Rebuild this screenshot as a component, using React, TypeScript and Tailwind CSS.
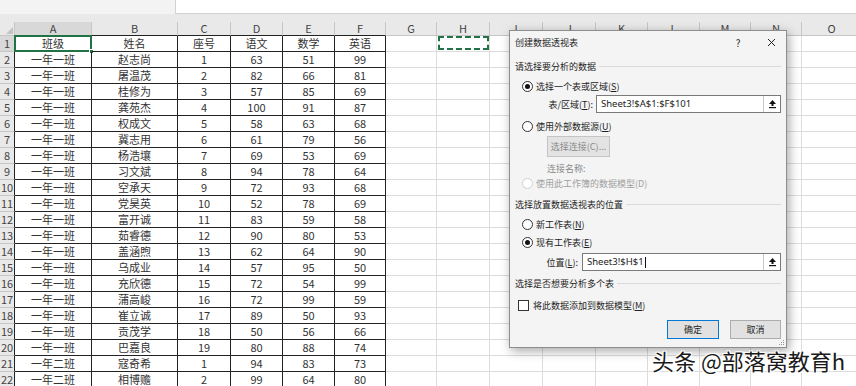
import React from "react";

const cols = [
  { k: "A", w: "w-[77px]" },
  { k: "B", w: "w-[86px]" },
  { k: "C", w: "w-[53px]" },
  { k: "D", w: "w-[52px]" },
  { k: "E", w: "w-[52px]" },
  { k: "F", w: "w-[51px]" },
  { k: "G", w: "w-[51px]" },
  { k: "H", w: "w-[53px]" },
  { k: "I", w: "w-[53px]" },
  { k: "J", w: "w-[53px]" },
  { k: "K", w: "w-[52px]" },
  { k: "L", w: "w-[52px]" },
  { k: "M", w: "w-[51px]" },
  { k: "N", w: "w-[51px]" },
  { k: "O", w: "w-[60px]" },
];

const data: string[][] = [
  ["班级", "姓名", "座号", "语文", "数学", "英语"],
  ["一年一班", "赵志尚", "1", "63", "51", "99"],
  ["一年一班", "屠温茂", "2", "82", "66", "81"],
  ["一年一班", "桂修为", "3", "57", "85", "69"],
  ["一年一班", "龚苑杰", "4", "100", "91", "87"],
  ["一年一班", "权成文", "5", "58", "63", "68"],
  ["一年一班", "冀志用", "6", "61", "79", "56"],
  ["一年一班", "杨浩壤", "7", "69", "53", "69"],
  ["一年一班", "习文斌", "8", "94", "78", "64"],
  ["一年一班", "空承天", "9", "72", "93", "68"],
  ["一年一班", "党昊英", "10", "52", "78", "69"],
  ["一年一班", "富开诚", "11", "83", "59", "58"],
  ["一年一班", "茹睿德", "12", "90", "80", "53"],
  ["一年一班", "盖涵煦", "13", "62", "64", "90"],
  ["一年一班", "乌成业", "14", "57", "95", "50"],
  ["一年一班", "充欣德", "15", "72", "54", "99"],
  ["一年一班", "蒲高峻", "16", "72", "99", "59"],
  ["一年一班", "崔立诚", "17", "89", "50", "93"],
  ["一年一班", "贡茂学", "18", "50", "56", "66"],
  ["一年一班", "巴嘉良", "19", "80", "88", "74"],
  ["一年二班", "寇奇希", "1", "94", "83", "73"],
  ["一年二班", "相博赡", "2", "99", "64", "80"],
];

function Radio({ checked, disabled }: { checked?: boolean; disabled?: boolean }) {
  return (
    <span
      className={`w-[11px] h-[11px] rounded-full border bg-white flex items-center justify-center shrink-0 ${
        disabled ? "border-[#cfcfcf]" : "border-[#333]"
      }`}
    >
      {checked && <span className="w-[5px] h-[5px] rounded-full bg-[#111]" />}
    </span>
  );
}

function U({ children }: { children: React.ReactNode }) {
  return <span className="underline underline-offset-1">{children}</span>;
}

function Heading({ text }: { text: string }) {
  return (
    <div className="flex items-center">
      <span>{text}</span>
      <span className="flex-1 h-px bg-[#dadada] ml-[3px]" />
    </div>
  );
}

function CollapseBtn() {
  return (
    <div className="w-[17px] h-full border-l border-[#c8c8c8] bg-white flex items-center justify-center">
      <svg width="9" height="10" viewBox="0 0 9 10">
        <polygon points="4.5,1 8,5 5.5,5 5.5,7 3.5,7 3.5,5 1,5" fill="#111" />
        <rect x="1" y="8" width="7" height="1.2" fill="#111" />
      </svg>
    </div>
  );
}

function Dialog() {
  return (
    <div className="absolute left-[509px] top-[30px] w-[278px] h-[318px] bg-[#f4f4f4] border border-[#8e8e8e] shadow-[2px_3px_10px_rgba(0,0,0,0.35)] flex flex-col px-[5px] text-[9px] leading-none text-[#1e1e1e] font-['Noto_Sans_CJK_SC',sans-serif]">
      <div className="h-[23px] flex items-center shrink-0">
        <span>创建数据透视表</span>
        <span className="ml-auto w-[20px] text-center text-[10px]">?</span>
        <span className="ml-[13px] w-[20px] flex justify-center">
          <svg width="9" height="9" viewBox="0 0 9 9">
            <path d="M1 1 L8 8 M8 1 L1 8" stroke="#222" strokeWidth="1" />
          </svg>
        </span>
      </div>
      <div className="h-[24px] flex flex-col justify-center shrink-0">
        <Heading text="请选择要分析的数据" />
      </div>
      <div className="h-[16px] flex items-center pl-[7px] gap-[3px] shrink-0">
        <Radio checked />
        <span>
          选择一个表或区域(<U>S</U>)
        </span>
      </div>
      <div className="h-[20px] flex items-center shrink-0">
        <span className="w-[78px] text-right">
          表/区域(<U>T</U>):
        </span>
        <div className="ml-[3px] flex-1 h-[18px] border border-[#7a7a7a] bg-white flex items-center">
          <span className="flex-1 pl-[4px] text-[9.5px] font-['Noto_Sans',sans-serif] text-[#222]">
            Sheet3!$A$1:$F$101
          </span>
          <CollapseBtn />
        </div>
      </div>
      <div className="mt-[4px] h-[16px] flex items-center pl-[7px] gap-[3px] shrink-0">
        <Radio />
        <span>
          使用外部数据源(<U>U</U>)
        </span>
      </div>
      <div className="mt-[2px] h-[21px] shrink-0 pl-[32px]">
        <div className="w-[63px] h-full bg-[#e3e3e3] border border-[#c4c4c4] flex items-center justify-center text-[#8a8a8a]">
          选择连接(C)...
        </div>
      </div>
      <div className="mt-[3px] h-[16px] flex items-center pl-[32px] text-[#8a8a8a] shrink-0">
        连接名称:
      </div>
      <div className="h-[15px] flex items-center pl-[7px] gap-[3px] text-[#a0a0a0] shrink-0">
        <Radio disabled />
        <span>使用此工作簿的数据模型(D)</span>
      </div>
      <div className="mt-[5px] h-[16px] flex flex-col justify-center shrink-0">
        <Heading text="选择放置数据透视表的位置" />
      </div>
      <div className="mt-[4px] h-[16px] flex items-center pl-[7px] gap-[3px] shrink-0">
        <Radio />
        <span>
          新工作表(<U>N</U>)
        </span>
      </div>
      <div className="mt-[2px] h-[16px] flex items-center pl-[7px] gap-[3px] shrink-0">
        <Radio checked />
        <span>
          现有工作表(<U>E</U>)
        </span>
      </div>
      <div className="mt-[2px] h-[20px] flex items-center shrink-0">
        <span className="w-[63px] text-right">
          位置(<U>L</U>):
        </span>
        <div className="ml-[4px] flex-1 h-[18px] border border-[#7a7a7a] bg-white flex items-center">
          <span className="flex-1 pl-[4px] text-[9.5px] font-['Noto_Sans',sans-serif] text-[#222] flex items-center">
            Sheet3!$H$1
            <span className="w-px h-[11px] bg-[#111] ml-[1px]" />
          </span>
          <CollapseBtn />
        </div>
      </div>
      <div className="mt-[3px] h-[16px] flex flex-col justify-center shrink-0">
        <Heading text="选择是否想要分析多个表" />
      </div>
      <div className="mt-[6px] h-[16px] flex items-center pl-[3px] gap-[4px] shrink-0">
        <span className="w-[11px] h-[11px] border border-[#333] bg-white shrink-0" />
        <span>
          将此数据添加到数据模型(<U>M</U>)
        </span>
      </div>
      <div className="mt-[7px] h-[19px] flex justify-end gap-[11px] shrink-0">
        <div className="w-[52px] h-full bg-[#e1e1e1] border border-[#0078d7] flex items-center justify-center">
          确定
        </div>
        <div className="w-[51px] h-full bg-[#e1e1e1] border border-[#adadad] flex items-center justify-center">
          取消
        </div>
      </div>
      <svg className="absolute right-[1px] bottom-[1px]" width="7" height="7" viewBox="0 0 7 7">
        <rect x="5" y="1" width="1" height="1" fill="#999" />
        <rect x="3" y="3" width="1" height="1" fill="#999" />
        <rect x="5" y="3" width="1" height="1" fill="#999" />
        <rect x="1" y="5" width="1" height="1" fill="#999" />
        <rect x="3" y="5" width="1" height="1" fill="#999" />
        <rect x="5" y="5" width="1" height="1" fill="#999" />
      </svg>
    </div>
  );
}

export default function App() {
  return (
    <div className="relative w-[856px] h-[386px] overflow-hidden bg-white font-['Noto_Sans_CJK_SC',sans-serif] text-[#333]">
      {/* formula bar strip */}
      <div className="h-[14px] flex">
        <div className="w-[175px] bg-[#f3f3f3]" />
        <div className="flex-1 bg-white border-l border-b border-[#d2d2d2]" />
      </div>
      <div className="h-[8px] bg-[#e9e9e9]" />

      {/* column headers */}
      <div className="flex h-[14px]">
        <div className="w-[15px] shrink-0 bg-[#e9e9e9] border-r border-b border-[#c6c6c6] flex items-end justify-end p-[1px]">
          <svg width="7" height="7" viewBox="0 0 7 7">
            <polygon points="7,0 7,7 0,7" fill="#c2c2c2" />
          </svg>
        </div>
        {cols.map((c, i) => (
          <div
            key={c.k}
            className={`${c.w} shrink-0 border-r border-b border-r-[#c6c6c6] flex items-center justify-center text-[11px] leading-none text-[#444] ${
              i < 6 ? "border-b-[#222]" : "border-b-[#c6c6c6]"
            } ${i === 0 ? "bg-[#d8d8d8]" : "bg-[#e9e9e9]"}`}
          >
            {c.k}
          </div>
        ))}
      </div>

      {/* rows */}
      {data.map((row, r) => (
        <div key={r} className="flex h-[16px]">
          <div
            className={`w-[15px] shrink-0 border-r border-b border-b-[#c6c6c6] border-r-[#222] flex items-center justify-center text-[11px] leading-none text-[#444] ${
              r === 0 ? "bg-[#d8d8d8]" : "bg-[#e9e9e9]"
            }`}
          >
            {r + 1}
          </div>
          {cols.map((c, i) => (
            <div
              key={c.k}
              className={`${c.w} shrink-0 relative border-r border-b flex items-center justify-center text-[11px] leading-none ${
                i < 6 ? "border-[#222]" : "border-[#dcdcdc]"
              }`}
            >
              {i < 6 ? row[i] : ""}
              {r === 0 && i === 0 && (
                <div className="absolute -left-px -top-px -right-[1px] -bottom-px border-2 border-[#217346]">
                  <div className="absolute -right-[4px] -bottom-[4px] w-[5px] h-[5px] bg-[#217346] border border-white" />
                </div>
              )}
              {r === 0 && i === 7 && (
                <div className="absolute left-px top-0 right-0 bottom-px border-2 border-dashed border-[#217346]" />
              )}
            </div>
          ))}
        </div>
      ))}

      <Dialog />

      <div className="absolute left-[652px] top-[345px] text-[22px] leading-[30px] text-[#1a1a1a] whitespace-nowrap [text-shadow:1px_1px_0_#fff,-1px_-1px_0_#fff,1px_-1px_0_#fff,-1px_1px_0_#fff]">
        头条 @部落窝教育h
      </div>
    </div>
  );
}
